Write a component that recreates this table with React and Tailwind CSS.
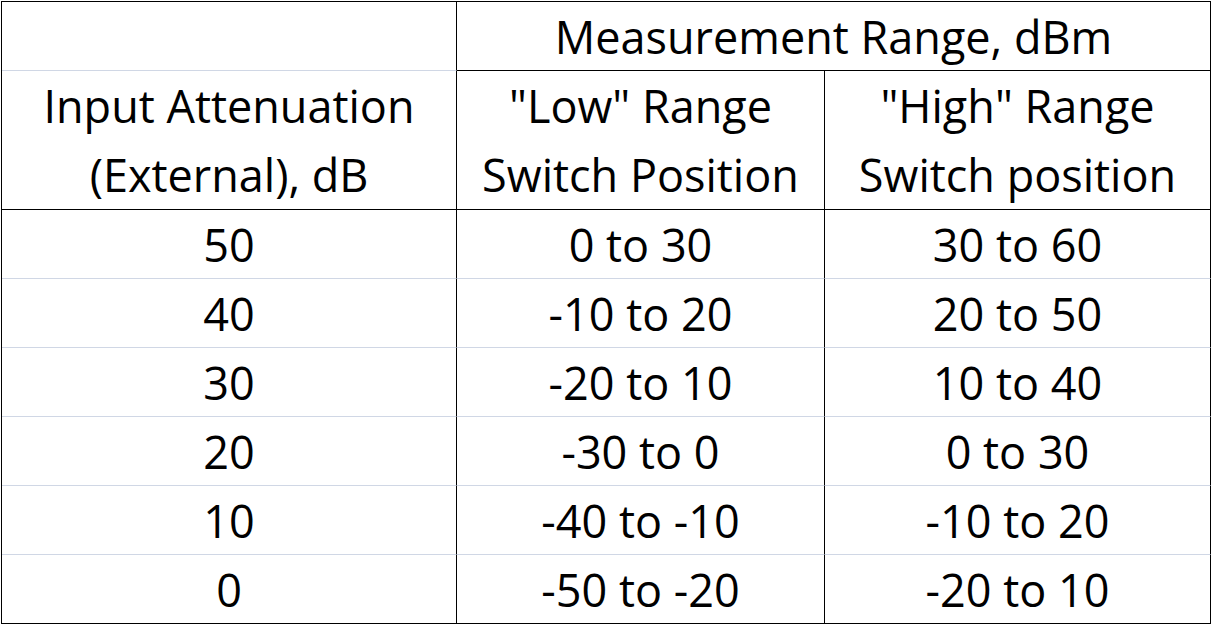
import React from "react";

const rows = [
    ["50", "0 to 30", "30 to 60"],
    ["40", "-10 to 20", "20 to 50"],
    ["30", "-20 to 10", "10 to 40"],
    ["20", "-30 to 0", "0 to 30"],
    ["10", "-40 to -10", "-10 to 20"],
    ["0", "-50 to -20", "-20 to 10"],
];

export default function App() {
    return (
        <div className="min-h-screen bg-white pl-px pt-px">
            <div
                className="grid w-[1210px] grid-cols-[455px_368px_386px] grid-rows-[69px_139px_repeat(6,69px)] border-l border-t border-black text-center text-[45px] text-black"
                style={{fontFamily: "'Open Sans', 'Noto Sans', sans-serif"}}
            >
                <div className="border-b border-r border-b-[#d0d7e5] border-r-black"/>
                <div className="col-span-2 overflow-hidden border-b border-r border-black leading-[70px]">
                    Measurement Range, dBm
                </div>

                <div className="border-b border-r border-black leading-[69px]">
                    Input Attenuation
                    <br/>
                    (External), dB
                </div>
                <div className="border-b border-r border-black leading-[69px]">
                    "Low" Range
                    <br/>
                    Switch Position
                </div>
                <div className="border-b border-r border-black leading-[69px]">
                    "High" Range
                    <br/>
                    Switch position
                </div>

                {rows.map((row, i) => {
                    const last = i === rows.length - 1;
                    return row.map((cell, j) => (
                        <div
                            key={`${i}-${j}`}
                            className={
                                last
                                    ? "overflow-hidden border-b border-r border-black leading-[70px]"
                                    : "overflow-hidden border-b border-r border-b-[#d0d7e5] border-r-black leading-[70px]"
                            }
                        >
                            {cell}
                        </div>
                    ));
                })}
            </div>
        </div>
    );
}
